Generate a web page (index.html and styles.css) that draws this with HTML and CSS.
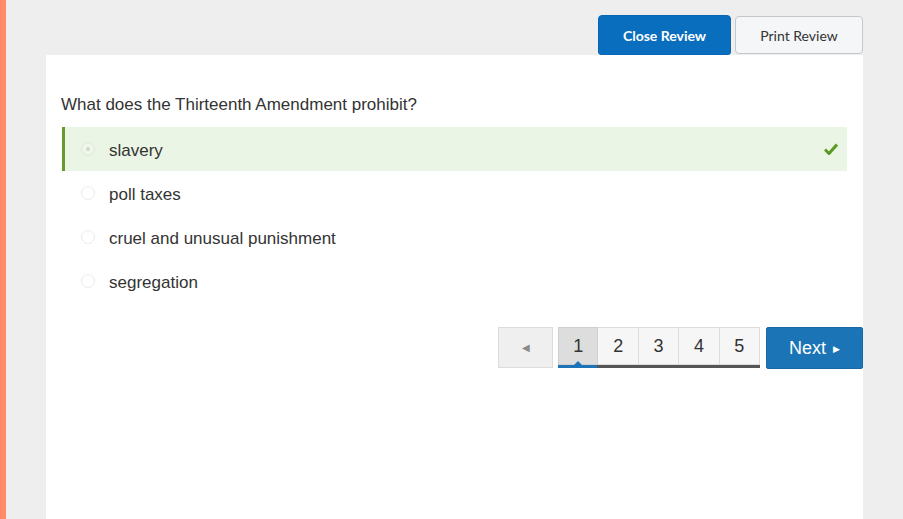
FILE: index.html
```html
<!DOCTYPE html>
<html>
<head>
<meta charset="utf-8">
<link rel="stylesheet" href="styles.css">
</head>
<body>
<div class="strip"></div>
<div class="main">
  <div class="toolbar">
    <button class="btn btn-primary">Close Review</button>
    <button class="btn btn-default">Print Review</button>
  </div>
  <div class="panel">
    <div class="question">What does the Thirteenth Amendment prohibit?</div>
    <ul class="options">
      <li class="option correct">
        <span class="radio checked"></span>
        <span class="label">slavery</span>
        <svg class="check" width="14" height="12" viewBox="0 0 14 12"><path d="M1 6.5 L5 10.5 L13 1.5" fill="none" stroke="#5b9a22" stroke-width="3"/></svg>
      </li>
      <li class="option"><span class="radio"></span><span class="label">poll taxes</span></li>
      <li class="option"><span class="radio"></span><span class="label">cruel and unusual punishment</span></li>
      <li class="option"><span class="radio"></span><span class="label">segregation</span></li>
    </ul>
    <div class="pager">
      <button class="prev">&#9664;</button>
      <div class="pages">
        <button class="page active">1</button>
        <button class="page">2</button>
        <button class="page">3</button>
        <button class="page">4</button>
        <button class="page">5</button>
      </div>
      <button class="next">Next <span class="arrow">&#9654;</span></button>
    </div>
  </div>
</div>
</body>
</html>
```
FILE: styles.css
```css
html, body {
  margin: 0;
  padding: 0;
  height: 100%;
}
body {
  background: #eeeeee;
  display: flex;
  font-family: "Liberation Sans", Arial, sans-serif;
  color: #333;
  overflow: hidden;
}
.strip {
  width: 6px;
  flex: none;
  background: #ff8c66;
}
.main {
  flex: 1;
  padding: 0 40px 0 40px;
  display: flex;
  flex-direction: column;
}
.toolbar {
  height: 55px;
  display: flex;
  justify-content: flex-end;
  align-items: flex-end;
  gap: 4px;
}
.btn {
  font-family: Lato, "Liberation Sans", sans-serif;
  font-size: 14px;
  border-radius: 4px;
  cursor: pointer;
}
.btn-primary {
  background: #0a6ebf;
  color: #fff;
  font-weight: 700;
  border: 1px solid #0a66b2;
  height: 40px;
  width: 133px;
  border-radius: 4px 4px 3px 3px;
}
.btn-default {
  background: #f4f6f8;
  color: #333;
  border: 1px solid #c3c8cd;
  height: 38px;
  width: 128px;
  margin-bottom: 1px;
}
.panel {
  flex: 1;
  background: #fff;
  padding: 40px 16px 0 15px;
}
.question {
  font-size: 17px;
  line-height: 20px;
  margin-bottom: 12px;
}
.options {
  list-style: none;
  margin: 0 0 24px 1px;
  padding: 0;
}
.option {
  height: 44px;
  box-sizing: border-box;
  padding-top: 3px;
  display: flex;
  align-items: center;
  border-left: 3px solid transparent;
  padding-left: 16px;
  font-size: 17px;
}
.option.correct {
  background: #ebf5e5;
  border-left-color: #6a9a2c;
}
.radio {
  width: 14px;
  height: 14px;
  margin-top: -3px;
  border-radius: 50%;
  border: 1px solid #e8ece8;
  background: #fff;
  box-sizing: border-box;
  margin-right: 14px;
  position: relative;
}
.correct .radio {
  background: #eef6e9;
  border-color: #dde8d8;
}
.radio.checked::after {
  content: "";
  position: absolute;
  left: 4px;
  top: 4px;
  width: 4px;
  height: 4px;
  border-radius: 50%;
  background: #cfd8cb;
}
.label {
  flex: 1;
}
.check {
  margin-right: 9px;
  margin-top: -3px;
}
.pager {
  display: flex;
  justify-content: flex-end;
  margin-right: -16px;
  height: 42px;
}
.pager button {
  font-family: "Liberation Sans", Arial, sans-serif;
  cursor: pointer;
}
.prev {
  width: 55px;
  height: 41px;
  margin-right: 5px;
  background: #efefef;
  border: 1px solid #dcdcdc;
  color: #8a8a8a;
  font-size: 10px;
  padding: 0;
}
.pages {
  display: flex;
  border-bottom: 3px solid #555;
  height: 38px;
  position: relative;
}
.page {
  width: 40.4px;
  height: 38px;
  background: #f6f6f6;
  border: 1px solid #dcdcdc;
  border-left: none;
  font-size: 18px;
  color: #333;
  padding: 0;
  position: relative;
}
.page:first-child {
  border-left: 1px solid #dcdcdc;
}
.page.active {
  background: #dddddd;
  border-color: #cfcfcf;
}
.page.active::after {
  content: "";
  position: absolute;
  left: -1px;
  right: 0;
  bottom: -4px;
  height: 3px;
  background: #1d73b8;
}
.page.active::before {
  content: "";
  position: absolute;
  left: 50%;
  margin-left: -4px;
  bottom: -1px;
  border-left: 4px solid transparent;
  border-right: 4px solid transparent;
  border-bottom: 4px solid #1d73b8;
}
.next {
  width: 97px;
  height: 42px;
  margin-left: 6px;
  background: #1a74b6;
  border: 1px solid #176aa6;
  color: #fff;
  font-size: 18px;
  border-radius: 2px;
  padding: 0;
}
.arrow {
  font-size: 9px;
  vertical-align: 2px;
  margin-left: 2px;
}
```
